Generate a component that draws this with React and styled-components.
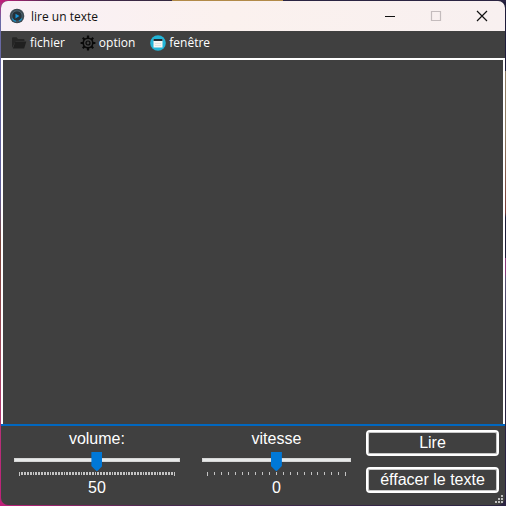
import React, { useState } from "react";
import styled, { createGlobalStyle } from "styled-components";

const GlobalStyle = createGlobalStyle`
  * { box-sizing: border-box; }
  body {
    margin: 0;
    background:
      linear-gradient(90deg, #c0207a, #4a2a50 10%, #33283f 34%, #b28a48 34% 56%, #2b2442 56%) top / 100% 2px no-repeat,
      linear-gradient(90deg, #c0207a, #4a2a50 30%, #2b2442) bottom / 100% 2px no-repeat,
      linear-gradient(180deg, #c0207a, #6a6aa6 4%, #5c5c96 38%, #7a4438 48%, #a04a5c 70%, #b83078 86%, #c0207a) left / 8px 100% no-repeat,
      linear-gradient(180deg, #1f1c3a 14%, #8f7c64 14% 26%, #7c3c38 42%, #1f1c3a 43% 51%, #8a3a7c 51% 54%, #5c5478 55%, #2b2442 75%) right / 8px 100% no-repeat,
      #1f1c3a;
  }
`;

const Window = styled.div`
  display: grid;
  grid-template-rows: auto auto 1fr auto;
  min-height: calc(100vh - 2px);
  margin: 1px;
  border-radius: 7px;
  overflow: hidden;
  position: relative;
  background: #404040;
  color: #fff;
`;

const TitleBar = styled.header`
  display: flex;
  align-items: center;
  height: 30px;
  padding-left: 8px;
  background: linear-gradient(90deg, #f9f0f6, #fbf1ee 45%, #f8f0f0);
  color: #111;
  font: 12px "Open Sans", sans-serif;
`;

const Title = styled.h1`
  flex: 1;
  margin: 0 0 0 6px;
  font: inherit;
`;

const CaptionButton = styled.button`
  display: grid;
  place-items: center;
  width: 46px;
  height: 30px;
  padding: 0;
  border: 0;
  background: none;
  color: #111;
  &:disabled { color: #c4bcbd; }
`;

const MenuBar = styled.nav`
  display: flex;
  align-items: center;
  gap: 15px;
  height: 27px;
  padding: 0 10px 4px;
`;

const MenuButton = styled.button`
  display: flex;
  align-items: center;
  gap: 3px;
  padding: 0;
  border: 0;
  background: none;
  color: #fff;
  font: 12px "Open Sans", sans-serif;
`;

const Editor = styled.textarea`
  display: block;
  width: 100%;
  height: 100%;
  padding: 4px;
  border: 2px solid #fff;
  border-bottom: 0;
  outline: 0;
  resize: none;
  background: #404040;
  color: #fff;
  font: 16px "Liberation Sans", sans-serif;
`;

const Controls = styled.footer`
  display: flex;
  padding: 4px 6px 5px 13px;
  border-top: 2px solid #0067c0;
  font: 16px/18px "Liberation Sans", sans-serif;
`;

const Sliders = styled.div`
  display: grid;
  flex: 1;
  grid-template-columns: 10fr 9fr;
  gap: 22px;
  margin-right: 15px;
`;

const Field = styled.div`
  display: flex;
  flex-direction: column;
  text-align: center;
`;

const Range = styled.input`
  appearance: none;
  width: 100%;
  height: 24px;
  margin: 0;
  background: none;
  &::-webkit-slider-runnable-track {
    height: 4px;
    border: 1px solid #d6d6d6;
    background: #e7eaea;
  }
  &::-webkit-slider-thumb {
    appearance: none;
    width: 11px;
    height: 19px;
    margin-top: -7px;
    background: #0078d7;
    clip-path: polygon(0 0, 100% 0, 100% 14px, 6px 100%, 5px 100%, 0 14px);
  }
`;

const Scale = styled.svg`
  display: block;
  width: calc(100% - 10px);
  height: 4px;
  margin: 0 5px;
  fill: #c4c4c4;
`;

const Value = styled.output`
  line-height: 24px;
`;

const Actions = styled.div`
  display: flex;
  flex-direction: column;
  gap: 11px;
  width: 133px;
`;

const ActionButton = styled.button`
  height: 26px;
  padding: 0;
  border: 2px solid #fff;
  border-radius: 4px;
  box-shadow: inset 0 0 0 1px #c9c9c9;
  background: #404040;
  color: #fff;
  font: inherit;
`;

const Grip = styled.svg`
  position: absolute;
  right: 2px;
  bottom: 2px;
  fill: #bfbfbf;
`;

function Ticks({ count, span }) {
  return (
    <Scale viewBox={`0 0 ${span + 1} 4`} preserveAspectRatio="none" shapeRendering="crispEdges" aria-hidden="true">
      {Array.from({ length: count }, (_, i) => (
        <rect key={i} x={Math.round((i * span) / (count - 1))} width="1" height={i % (count - 1) ? 3 : 4} />
      ))}
    </Scale>
  );
}

function SliderField({ id, label, min, max, initial, count, span }) {
  const [value, setValue] = useState(initial);
  return (
    <Field>
      <label htmlFor={id}>{label}</label>
      <Range id={id} type="range" min={min} max={max} value={value} onChange={(e) => setValue(Number(e.target.value))} />
      <Ticks count={count} span={span} />
      <Value htmlFor={id}>{value}</Value>
    </Field>
  );
}

const AppIcon = () => (
  <svg width="16" height="16" viewBox="0 0 16 16" aria-hidden="true">
    <circle cx="8" cy="8" r="7.3" fill="#3c4a53" />
    <circle cx="8" cy="8" r="5.2" fill="#25323b" stroke="#4d6370" strokeWidth="1" />
    <path d="M3.2 10.5A5.4 5.4 0 0 0 7 13.3M12.8 10.5A5.4 5.4 0 0 1 10 13" fill="none" stroke="#168cc4" strokeWidth="1.3" />
    <path d="M6.5 5.7 10.4 8l-3.9 2.5z" fill="#1796dc" />
  </svg>
);

const FolderIcon = () => (
  <svg width="16" height="16" viewBox="0 0 16 16" aria-hidden="true">
    <path d="M1 13V3.2Q1 2.3 2 2.3h3.6L7 4h5.6q.9 0 .9 1v1H4.8z" fill="#262626" />
    <path d="M4.4 6.5h10.9L13.2 13.5H1.8z" fill="#202020" />
  </svg>
);

const GearIcon = () => (
  <svg width="16" height="16" viewBox="0 0 16 16" fill="none" stroke="#080808" aria-hidden="true">
    <circle cx="8" cy="8" r="4.8" strokeWidth="1.6" />
    <circle cx="8" cy="8" r="2" strokeWidth="1.2" />
    {[0, 45, 90, 135, 180, 225, 270, 315].map((a) => (
      <path key={a} d="M8 3V.6" strokeWidth="2.2" transform={`rotate(${a} 8 8)`} />
    ))}
  </svg>
);

const WindowIcon = () => (
  <svg width="16" height="16" viewBox="0 0 16 16" aria-hidden="true">
    <circle cx="8" cy="8" r="7.8" fill="#22b5d8" />
    <path d="M3.5 4h9v8.5h-9z" fill="#f6f6f2" />
    <path d="M3.5 4h9v2h-9z" fill="#202c33" />
    <path d="M5 8.5h6M5 10.5h6" stroke="#dfe3e0" strokeWidth="1" />
  </svg>
);

const CaptionIcon = ({ d }) => (
  <svg width="12" height="12" viewBox="0 0 12 12" fill="none" stroke="currentColor" strokeWidth="1.2" aria-hidden="true">
    <path d={d} />
  </svg>
);

export default function App() {
  const [text, setText] = useState("");
  return (
    <>
      <GlobalStyle />
      <Window>
        <TitleBar>
          <AppIcon />
          <Title>lire un texte</Title>
          <CaptionButton aria-label="Réduire"><CaptionIcon d="M1 6.5h10" /></CaptionButton>
          <CaptionButton aria-label="Agrandir" disabled><CaptionIcon d="M1.5 1.5h9v9h-9z" /></CaptionButton>
          <CaptionButton aria-label="Fermer"><CaptionIcon d="m1 1 10 10M11 1 1 11" /></CaptionButton>
        </TitleBar>
        <MenuBar>
          <MenuButton><FolderIcon />fichier</MenuButton>
          <MenuButton><GearIcon />option</MenuButton>
          <MenuButton><WindowIcon />fenêtre</MenuButton>
        </MenuBar>
        <Editor aria-label="Texte à lire" value={text} onChange={(e) => setText(e.target.value)} />
        <Controls>
          <Sliders>
            <SliderField id="volume" label="volume:" min={0} max={100} initial={50} count={101} span={155} />
            <SliderField id="vitesse" label="vitesse" min={-10} max={10} initial={0} count={21} span={138} />
          </Sliders>
          <Actions>
            <ActionButton>Lire</ActionButton>
            <ActionButton onClick={() => setText("")}>éffacer le texte</ActionButton>
          </Actions>
        </Controls>
        <Grip width="8" height="8" aria-hidden="true">
          <path d="M6 0h2v2H6zM3 3h2v2H3zM6 3h2v2H6zM0 6h2v2H0zM3 6h2v2H3zM6 6h2v2H6z" />
        </Grip>
      </Window>
    </>
  );
}
